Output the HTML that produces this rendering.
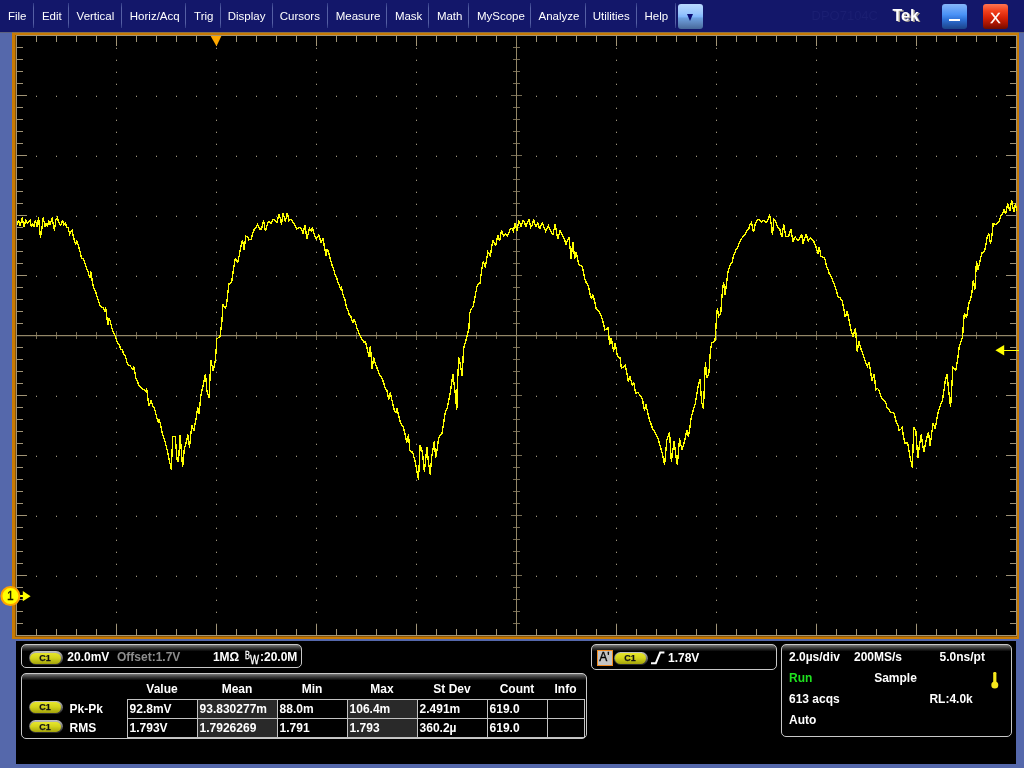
<!DOCTYPE html>
<html><head><meta charset="utf-8"><title>Tek DPO7104C</title>
<style>
html,body{margin:0;padding:0}
body{width:1024px;height:768px;overflow:hidden;background:#5568ab;position:relative;font-family:"Liberation Sans",sans-serif}
#menubar{position:absolute;left:0;top:0;width:1024px;height:32px;background:#13176a}
.mi{position:absolute;top:0;line-height:32px;font-size:11.5px;color:#fff;white-space:nowrap}
.sep{position:absolute;top:3px;width:1px;height:25px;background:linear-gradient(#2f3985,#555fa4 20%,#555fa4 80%,#2f3985)}
#dd{position:absolute;left:678px;top:4px;width:25px;height:25px;border-radius:3px;background:linear-gradient(#b9d9ff 0,#98c5fd 38%,#82b7fb 50%,#6c9fde 57%,#5f88c0 76%,#47689a 100%)}
#dd:after{content:"";position:absolute;left:9.1px;top:10.2px;border-left:3.5px solid transparent;border-right:3.5px solid transparent;border-top:7px solid #0b0c74}
#model{position:absolute;left:811.5px;top:0;line-height:32px;font-size:13px;color:#1b1f72}
#tek{position:absolute;left:892.5px;top:-0.2px;line-height:32px;font-size:16px;font-weight:bold;color:#fff;text-shadow:1.4px 1.3px 0 #a39c90}
.wb{position:absolute;top:4px;width:25px;height:25px;border-radius:3px;color:#fff;text-align:center}
#min{left:942px;background:linear-gradient(#86b6fa,#4a92f6 42%,#2f72d8 62%,#2458ae 82%,#1c4488)}
#min:after{content:"";position:absolute;left:7px;top:14.5px;width:11px;height:2px;background:#fff}
#cls{left:983px;background:linear-gradient(#ff7452,#f2401c 28%,#d62206 55%,#a51402 80%,#6e0c00);font-size:15.5px;line-height:27px;-webkit-text-stroke:0.3px #fff}
#frame{position:absolute;left:12px;top:32px;width:1007px;height:607px;background:#c87a04}
#mrow{position:absolute;left:0;top:32px;width:1024px;height:1px;background:#5d627f}
#ftop{position:absolute;left:12px;top:32px;width:1007px;height:1px;background:#86724e}
#bev{position:absolute;left:15px;top:35px;width:1002px;height:602px;background:#8a5606}
#scr{position:absolute;left:16px;top:35px;width:999px;height:599px;border:1px solid #a29476;background:#000}
#ov{position:absolute;left:0;top:0}
#panel{position:absolute;left:16px;top:641px;width:1000px;height:123px;background:#000}
.box{position:absolute;border:1px solid #c8c8c8;border-radius:5px;background:linear-gradient(#787878 0,#3a3a3a 3px,#000 6.5px);box-sizing:border-box}
.t{position:absolute;font-size:12px;font-weight:bold;color:#fff;white-space:nowrap;line-height:14px}
.pill{position:absolute;width:33.6px;height:13.8px;border-radius:7px;background:linear-gradient(#c4c4c4,#8e8e8e 35%,#3a3a3a 80%,#2a2a2a)}
.pill b{position:absolute;left:1.4px;top:1.9px;right:1.4px;bottom:1.3px;border-radius:6px;background:linear-gradient(#e6e62c,#d4d41c 45%,#a4a40c);font-size:9px;font-weight:bold;line-height:10.2px;color:#111;text-align:center;text-indent:-1.6px;-webkit-text-stroke:0.25px #222}
.ln{position:absolute;background:#c2c2c2}
#root{position:absolute;left:0;top:0;width:1024px;height:768px;will-change:transform}
</style></head><body><div id="root">
<div id="menubar"><span class="mi" style="left:7.9px">File</span><span class="mi" style="left:41.9px">Edit</span><span class="mi" style="left:76.6px">Vertical</span><span class="mi" style="left:129.8px">Horiz/Acq</span><span class="mi" style="left:194.1px">Trig</span><span class="mi" style="left:227.7px">Display</span><span class="mi" style="left:279.7px">Cursors</span><span class="mi" style="left:335.7px">Measure</span><span class="mi" style="left:394.9px">Mask</span><span class="mi" style="left:436.9px">Math</span><span class="mi" style="left:476.9px">MyScope</span><span class="mi" style="left:538.5px">Analyze</span><span class="mi" style="left:592.7px">Utilities</span><span class="mi" style="left:644.5px">Help</span><i class="sep" style="left:33.0px"></i><i class="sep" style="left:68.0px"></i><i class="sep" style="left:121.0px"></i><i class="sep" style="left:185.0px"></i><i class="sep" style="left:220.0px"></i><i class="sep" style="left:272.0px"></i><i class="sep" style="left:327.0px"></i><i class="sep" style="left:386.0px"></i><i class="sep" style="left:428.0px"></i><i class="sep" style="left:468.0px"></i><i class="sep" style="left:530.0px"></i><i class="sep" style="left:585.0px"></i><i class="sep" style="left:636.0px"></i><i class="sep" style="left:675.0px"></i><div id="dd"></div><div id="model">DPO7104C</div><div id="tek">Tek</div><div id="min" class="wb"></div><div id="cls" class="wb">X</div></div>
<div id="mrow"></div><div id="frame"></div><div id="ftop"></div><div id="bev"></div><div id="scr"></div>
<div id="panel"></div>
<div class="box" style="left:21px;top:644px;width:281px;height:24px"></div>
<div class="pill" style="left:29px;top:651.3px"><b>C1</b></div>
<div class="t" style="left:67.3px;top:650.3px;">20.0mV</div>
<div class="t" style="left:117px;top:650.3px;color:#8c8c8c">Offset:1.7V</div>
<div class="t" style="left:212.9px;top:650.3px;">1M&#937;</div>
<div class="t" style="left:245.2px;top:649.0px;font-size:10px;font-weight:normal;-webkit-text-stroke:0.3px #fff;transform:scaleX(0.74);transform-origin:0 0">B</div>
<div class="t" style="left:250.4px;top:652.6px;font-size:12px;font-weight:normal;-webkit-text-stroke:0.3px #fff;transform:scaleX(0.8);transform-origin:0 0">W</div>
<div class="t" style="left:260px;top:650.3px;">:20.0M</div>
<div class="box" style="left:21px;top:673px;width:566px;height:66px"></div>
<div class="t" style="left:127px;width:70px;text-align:center;top:681.8px">Value</div>
<div class="t" style="left:197px;width:80px;text-align:center;top:681.8px">Mean</div>
<div class="t" style="left:277px;width:70px;text-align:center;top:681.8px">Min</div>
<div class="t" style="left:347px;width:70px;text-align:center;top:681.8px">Max</div>
<div class="t" style="left:417px;width:70px;text-align:center;top:681.8px">St Dev</div>
<div class="t" style="left:487px;width:60px;text-align:center;top:681.8px">Count</div>
<div class="t" style="left:547px;width:37px;text-align:center;top:681.8px">Info</div>
<div class="ln" style="left:127px;top:699px;width:458px;height:1px"></div>
<div class="ln" style="left:127px;top:718px;width:458px;height:1px"></div>
<div class="ln" style="left:127px;top:737px;width:458px;height:1px"></div>
<div class="ln" style="left:127px;top:699px;width:1px;height:39px"></div>
<div class="ln" style="left:197px;top:699px;width:1px;height:39px"></div>
<div class="ln" style="left:277px;top:699px;width:1px;height:39px"></div>
<div class="ln" style="left:347px;top:699px;width:1px;height:39px"></div>
<div class="ln" style="left:417px;top:699px;width:1px;height:39px"></div>
<div class="ln" style="left:487px;top:699px;width:1px;height:39px"></div>
<div class="ln" style="left:547px;top:699px;width:1px;height:39px"></div>
<div class="ln" style="left:584px;top:699px;width:1px;height:39px"></div>
<div class="t" style="left:129.6px;top:701.8px;">92.8mV</div>
<div style="position:absolute;left:198px;top:700px;width:79px;height:18px;background:#292929"></div>
<div class="t" style="left:199.6px;top:701.8px;">93.830277m</div>
<div class="t" style="left:279.6px;top:701.8px;">88.0m</div>
<div style="position:absolute;left:348px;top:700px;width:69px;height:18px;background:#292929"></div>
<div class="t" style="left:349.6px;top:701.8px;">106.4m</div>
<div class="t" style="left:419.6px;top:701.8px;">2.491m</div>
<div class="t" style="left:489.6px;top:701.8px;">619.0</div>
<div class="t" style="left:129.6px;top:720.8px;">1.793V</div>
<div style="position:absolute;left:198px;top:719px;width:79px;height:18px;background:#292929"></div>
<div class="t" style="left:199.6px;top:720.8px;">1.7926269</div>
<div class="t" style="left:279.6px;top:720.8px;">1.791</div>
<div style="position:absolute;left:348px;top:719px;width:69px;height:18px;background:#292929"></div>
<div class="t" style="left:349.6px;top:720.8px;">1.793</div>
<div class="t" style="left:419.6px;top:720.8px;">360.2&#181;</div>
<div class="t" style="left:489.6px;top:720.8px;">619.0</div>
<div class="pill" style="left:29px;top:700.5px"><b>C1</b></div>
<div class="pill" style="left:29px;top:719.7px"><b>C1</b></div>
<div class="t" style="left:69.6px;top:701.8px;">Pk-Pk</div>
<div class="t" style="left:69.6px;top:720.8px;">RMS</div>
<div class="box" style="left:591px;top:644px;width:186px;height:26px"></div>
<div style="position:absolute;left:597px;top:650px;width:16px;height:16px;box-sizing:border-box;border:1px solid #f08a20;background:#c4c4c4;font-size:12px;font-weight:normal;-webkit-text-stroke:0.35px #000;line-height:12px;color:#000;text-align:center;text-indent:-1px">A'</div>
<div class="pill" style="left:614px;top:651.5px"><b>C1</b></div>
<svg style="position:absolute;left:649px;top:650px" width="18" height="16" viewBox="649 650 18 16"><path d="M651 663.2 H655.8 L660.2 652.6 H664.4" fill="none" stroke="#fff" stroke-width="2"/></svg>
<div class="t" style="left:668px;top:650.5px;">1.78V</div>
<div class="box" style="left:781px;top:644px;width:231px;height:93px"></div>
<div class="t" style="left:789px;top:649.8px;">2.0&#181;s/div</div>
<div class="t" style="left:854px;top:649.8px;">200MS/s</div>
<div class="t" style="left:939.6px;top:649.8px;">5.0ns/pt</div>
<div class="t" style="left:789px;top:670.8px;color:#1fe31f">Run</div>
<div class="t" style="left:874.2px;top:670.8px;">Sample</div>
<div class="t" style="left:789px;top:691.8px;">613 acqs</div>
<div class="t" style="left:929.4px;top:691.8px;">RL:4.0k</div>
<div class="t" style="left:789px;top:712.8px;">Auto</div>
<svg style="position:absolute;left:989px;top:670px" width="12" height="20" viewBox="989 670 12 20"><rect x="993.2" y="672" width="3.2" height="12" rx="1.2" fill="#f6e81c"/><circle cx="994.8" cy="685.1" r="3.5" fill="#f6e81c"/></svg>
<svg id="ov" width="1024" height="768" viewBox="0 0 1024 768" shape-rendering="crispEdges">
<rect x="36" y="36" width="1" height="6" fill="#a19475"/>
<rect x="36" y="629" width="1" height="6" fill="#a19475"/>
<rect x="56" y="36" width="1" height="6" fill="#a19475"/>
<rect x="56" y="629" width="1" height="6" fill="#a19475"/>
<rect x="76" y="36" width="1" height="6" fill="#a19475"/>
<rect x="76" y="629" width="1" height="6" fill="#a19475"/>
<rect x="96" y="36" width="1" height="6" fill="#a19475"/>
<rect x="96" y="629" width="1" height="6" fill="#a19475"/>
<rect x="116" y="36" width="1" height="10" fill="#a19475"/>
<rect x="116" y="625" width="1" height="10" fill="#a19475"/>
<rect x="136" y="36" width="1" height="6" fill="#a19475"/>
<rect x="136" y="629" width="1" height="6" fill="#a19475"/>
<rect x="156" y="36" width="1" height="6" fill="#a19475"/>
<rect x="156" y="629" width="1" height="6" fill="#a19475"/>
<rect x="176" y="36" width="1" height="6" fill="#a19475"/>
<rect x="176" y="629" width="1" height="6" fill="#a19475"/>
<rect x="196" y="36" width="1" height="6" fill="#a19475"/>
<rect x="196" y="629" width="1" height="6" fill="#a19475"/>
<rect x="216" y="36" width="1" height="10" fill="#a19475"/>
<rect x="216" y="625" width="1" height="10" fill="#a19475"/>
<rect x="236" y="36" width="1" height="6" fill="#a19475"/>
<rect x="236" y="629" width="1" height="6" fill="#a19475"/>
<rect x="256" y="36" width="1" height="6" fill="#a19475"/>
<rect x="256" y="629" width="1" height="6" fill="#a19475"/>
<rect x="276" y="36" width="1" height="6" fill="#a19475"/>
<rect x="276" y="629" width="1" height="6" fill="#a19475"/>
<rect x="296" y="36" width="1" height="6" fill="#a19475"/>
<rect x="296" y="629" width="1" height="6" fill="#a19475"/>
<rect x="316" y="36" width="1" height="10" fill="#a19475"/>
<rect x="316" y="625" width="1" height="10" fill="#a19475"/>
<rect x="336" y="36" width="1" height="6" fill="#a19475"/>
<rect x="336" y="629" width="1" height="6" fill="#a19475"/>
<rect x="356" y="36" width="1" height="6" fill="#a19475"/>
<rect x="356" y="629" width="1" height="6" fill="#a19475"/>
<rect x="376" y="36" width="1" height="6" fill="#a19475"/>
<rect x="376" y="629" width="1" height="6" fill="#a19475"/>
<rect x="396" y="36" width="1" height="6" fill="#a19475"/>
<rect x="396" y="629" width="1" height="6" fill="#a19475"/>
<rect x="416" y="36" width="1" height="10" fill="#a19475"/>
<rect x="416" y="625" width="1" height="10" fill="#a19475"/>
<rect x="436" y="36" width="1" height="6" fill="#a19475"/>
<rect x="436" y="629" width="1" height="6" fill="#a19475"/>
<rect x="456" y="36" width="1" height="6" fill="#a19475"/>
<rect x="456" y="629" width="1" height="6" fill="#a19475"/>
<rect x="476" y="36" width="1" height="6" fill="#a19475"/>
<rect x="476" y="629" width="1" height="6" fill="#a19475"/>
<rect x="496" y="36" width="1" height="6" fill="#a19475"/>
<rect x="496" y="629" width="1" height="6" fill="#a19475"/>
<rect x="516" y="36" width="1" height="10" fill="#a19475"/>
<rect x="516" y="625" width="1" height="10" fill="#a19475"/>
<rect x="536" y="36" width="1" height="6" fill="#a19475"/>
<rect x="536" y="629" width="1" height="6" fill="#a19475"/>
<rect x="556" y="36" width="1" height="6" fill="#a19475"/>
<rect x="556" y="629" width="1" height="6" fill="#a19475"/>
<rect x="576" y="36" width="1" height="6" fill="#a19475"/>
<rect x="576" y="629" width="1" height="6" fill="#a19475"/>
<rect x="596" y="36" width="1" height="6" fill="#a19475"/>
<rect x="596" y="629" width="1" height="6" fill="#a19475"/>
<rect x="616" y="36" width="1" height="10" fill="#a19475"/>
<rect x="616" y="625" width="1" height="10" fill="#a19475"/>
<rect x="636" y="36" width="1" height="6" fill="#a19475"/>
<rect x="636" y="629" width="1" height="6" fill="#a19475"/>
<rect x="656" y="36" width="1" height="6" fill="#a19475"/>
<rect x="656" y="629" width="1" height="6" fill="#a19475"/>
<rect x="676" y="36" width="1" height="6" fill="#a19475"/>
<rect x="676" y="629" width="1" height="6" fill="#a19475"/>
<rect x="696" y="36" width="1" height="6" fill="#a19475"/>
<rect x="696" y="629" width="1" height="6" fill="#a19475"/>
<rect x="716" y="36" width="1" height="10" fill="#a19475"/>
<rect x="716" y="625" width="1" height="10" fill="#a19475"/>
<rect x="736" y="36" width="1" height="6" fill="#a19475"/>
<rect x="736" y="629" width="1" height="6" fill="#a19475"/>
<rect x="756" y="36" width="1" height="6" fill="#a19475"/>
<rect x="756" y="629" width="1" height="6" fill="#a19475"/>
<rect x="776" y="36" width="1" height="6" fill="#a19475"/>
<rect x="776" y="629" width="1" height="6" fill="#a19475"/>
<rect x="796" y="36" width="1" height="6" fill="#a19475"/>
<rect x="796" y="629" width="1" height="6" fill="#a19475"/>
<rect x="816" y="36" width="1" height="10" fill="#a19475"/>
<rect x="816" y="625" width="1" height="10" fill="#a19475"/>
<rect x="836" y="36" width="1" height="6" fill="#a19475"/>
<rect x="836" y="629" width="1" height="6" fill="#a19475"/>
<rect x="856" y="36" width="1" height="6" fill="#a19475"/>
<rect x="856" y="629" width="1" height="6" fill="#a19475"/>
<rect x="876" y="36" width="1" height="6" fill="#a19475"/>
<rect x="876" y="629" width="1" height="6" fill="#a19475"/>
<rect x="896" y="36" width="1" height="6" fill="#a19475"/>
<rect x="896" y="629" width="1" height="6" fill="#a19475"/>
<rect x="916" y="36" width="1" height="10" fill="#a19475"/>
<rect x="916" y="625" width="1" height="10" fill="#a19475"/>
<rect x="936" y="36" width="1" height="6" fill="#a19475"/>
<rect x="936" y="629" width="1" height="6" fill="#a19475"/>
<rect x="956" y="36" width="1" height="6" fill="#a19475"/>
<rect x="956" y="629" width="1" height="6" fill="#a19475"/>
<rect x="976" y="36" width="1" height="6" fill="#a19475"/>
<rect x="976" y="629" width="1" height="6" fill="#a19475"/>
<rect x="996" y="36" width="1" height="6" fill="#a19475"/>
<rect x="996" y="629" width="1" height="6" fill="#a19475"/>
<rect x="17" y="47" width="6" height="1" fill="#a19475"/>
<rect x="1010" y="47" width="6" height="1" fill="#a19475"/>
<rect x="17" y="59" width="6" height="1" fill="#a19475"/>
<rect x="1010" y="59" width="6" height="1" fill="#a19475"/>
<rect x="17" y="71" width="6" height="1" fill="#a19475"/>
<rect x="1010" y="71" width="6" height="1" fill="#a19475"/>
<rect x="17" y="83" width="6" height="1" fill="#a19475"/>
<rect x="1010" y="83" width="6" height="1" fill="#a19475"/>
<rect x="17" y="95" width="10" height="1" fill="#a19475"/>
<rect x="1006" y="95" width="10" height="1" fill="#a19475"/>
<rect x="17" y="107" width="6" height="1" fill="#a19475"/>
<rect x="1010" y="107" width="6" height="1" fill="#a19475"/>
<rect x="17" y="119" width="6" height="1" fill="#a19475"/>
<rect x="1010" y="119" width="6" height="1" fill="#a19475"/>
<rect x="17" y="131" width="6" height="1" fill="#a19475"/>
<rect x="1010" y="131" width="6" height="1" fill="#a19475"/>
<rect x="17" y="143" width="6" height="1" fill="#a19475"/>
<rect x="1010" y="143" width="6" height="1" fill="#a19475"/>
<rect x="17" y="155" width="10" height="1" fill="#a19475"/>
<rect x="1006" y="155" width="10" height="1" fill="#a19475"/>
<rect x="17" y="167" width="6" height="1" fill="#a19475"/>
<rect x="1010" y="167" width="6" height="1" fill="#a19475"/>
<rect x="17" y="179" width="6" height="1" fill="#a19475"/>
<rect x="1010" y="179" width="6" height="1" fill="#a19475"/>
<rect x="17" y="191" width="6" height="1" fill="#a19475"/>
<rect x="1010" y="191" width="6" height="1" fill="#a19475"/>
<rect x="17" y="203" width="6" height="1" fill="#a19475"/>
<rect x="1010" y="203" width="6" height="1" fill="#a19475"/>
<rect x="17" y="215" width="10" height="1" fill="#a19475"/>
<rect x="1006" y="215" width="10" height="1" fill="#a19475"/>
<rect x="17" y="227" width="6" height="1" fill="#a19475"/>
<rect x="1010" y="227" width="6" height="1" fill="#a19475"/>
<rect x="17" y="239" width="6" height="1" fill="#a19475"/>
<rect x="1010" y="239" width="6" height="1" fill="#a19475"/>
<rect x="17" y="251" width="6" height="1" fill="#a19475"/>
<rect x="1010" y="251" width="6" height="1" fill="#a19475"/>
<rect x="17" y="263" width="6" height="1" fill="#a19475"/>
<rect x="1010" y="263" width="6" height="1" fill="#a19475"/>
<rect x="17" y="275" width="10" height="1" fill="#a19475"/>
<rect x="1006" y="275" width="10" height="1" fill="#a19475"/>
<rect x="17" y="287" width="6" height="1" fill="#a19475"/>
<rect x="1010" y="287" width="6" height="1" fill="#a19475"/>
<rect x="17" y="299" width="6" height="1" fill="#a19475"/>
<rect x="1010" y="299" width="6" height="1" fill="#a19475"/>
<rect x="17" y="311" width="6" height="1" fill="#a19475"/>
<rect x="1010" y="311" width="6" height="1" fill="#a19475"/>
<rect x="17" y="323" width="6" height="1" fill="#a19475"/>
<rect x="1010" y="323" width="6" height="1" fill="#a19475"/>
<rect x="17" y="335" width="10" height="1" fill="#a19475"/>
<rect x="1006" y="335" width="10" height="1" fill="#a19475"/>
<rect x="17" y="347" width="6" height="1" fill="#a19475"/>
<rect x="1010" y="347" width="6" height="1" fill="#a19475"/>
<rect x="17" y="359" width="6" height="1" fill="#a19475"/>
<rect x="1010" y="359" width="6" height="1" fill="#a19475"/>
<rect x="17" y="371" width="6" height="1" fill="#a19475"/>
<rect x="1010" y="371" width="6" height="1" fill="#a19475"/>
<rect x="17" y="383" width="6" height="1" fill="#a19475"/>
<rect x="1010" y="383" width="6" height="1" fill="#a19475"/>
<rect x="17" y="395" width="10" height="1" fill="#a19475"/>
<rect x="1006" y="395" width="10" height="1" fill="#a19475"/>
<rect x="17" y="407" width="6" height="1" fill="#a19475"/>
<rect x="1010" y="407" width="6" height="1" fill="#a19475"/>
<rect x="17" y="419" width="6" height="1" fill="#a19475"/>
<rect x="1010" y="419" width="6" height="1" fill="#a19475"/>
<rect x="17" y="431" width="6" height="1" fill="#a19475"/>
<rect x="1010" y="431" width="6" height="1" fill="#a19475"/>
<rect x="17" y="443" width="6" height="1" fill="#a19475"/>
<rect x="1010" y="443" width="6" height="1" fill="#a19475"/>
<rect x="17" y="455" width="10" height="1" fill="#a19475"/>
<rect x="1006" y="455" width="10" height="1" fill="#a19475"/>
<rect x="17" y="467" width="6" height="1" fill="#a19475"/>
<rect x="1010" y="467" width="6" height="1" fill="#a19475"/>
<rect x="17" y="479" width="6" height="1" fill="#a19475"/>
<rect x="1010" y="479" width="6" height="1" fill="#a19475"/>
<rect x="17" y="491" width="6" height="1" fill="#a19475"/>
<rect x="1010" y="491" width="6" height="1" fill="#a19475"/>
<rect x="17" y="503" width="6" height="1" fill="#a19475"/>
<rect x="1010" y="503" width="6" height="1" fill="#a19475"/>
<rect x="17" y="515" width="10" height="1" fill="#a19475"/>
<rect x="1006" y="515" width="10" height="1" fill="#a19475"/>
<rect x="17" y="527" width="6" height="1" fill="#a19475"/>
<rect x="1010" y="527" width="6" height="1" fill="#a19475"/>
<rect x="17" y="539" width="6" height="1" fill="#a19475"/>
<rect x="1010" y="539" width="6" height="1" fill="#a19475"/>
<rect x="17" y="551" width="6" height="1" fill="#a19475"/>
<rect x="1010" y="551" width="6" height="1" fill="#a19475"/>
<rect x="17" y="563" width="6" height="1" fill="#a19475"/>
<rect x="1010" y="563" width="6" height="1" fill="#a19475"/>
<rect x="17" y="575" width="10" height="1" fill="#a19475"/>
<rect x="1006" y="575" width="10" height="1" fill="#a19475"/>
<rect x="17" y="587" width="6" height="1" fill="#a19475"/>
<rect x="1010" y="587" width="6" height="1" fill="#a19475"/>
<rect x="17" y="599" width="6" height="1" fill="#a19475"/>
<rect x="1010" y="599" width="6" height="1" fill="#a19475"/>
<rect x="17" y="611" width="6" height="1" fill="#a19475"/>
<rect x="1010" y="611" width="6" height="1" fill="#a19475"/>
<rect x="17" y="623" width="6" height="1" fill="#a19475"/>
<rect x="1010" y="623" width="6" height="1" fill="#a19475"/>
<rect x="17" y="335" width="999" height="1" fill="#938768"/>
<rect x="17" y="336" width="999" height="1" fill="#938768" opacity="0.22"/>
<rect x="516" y="36" width="1" height="599" fill="#938768"/>
<rect x="36" y="332" width="1" height="7" fill="#938768" opacity="0.8"/>
<rect x="56" y="332" width="1" height="7" fill="#938768" opacity="0.8"/>
<rect x="76" y="332" width="1" height="7" fill="#938768" opacity="0.8"/>
<rect x="96" y="332" width="1" height="7" fill="#938768" opacity="0.8"/>
<rect x="116" y="331" width="1" height="9" fill="#938768" opacity="0.8"/>
<rect x="136" y="332" width="1" height="7" fill="#938768" opacity="0.8"/>
<rect x="156" y="332" width="1" height="7" fill="#938768" opacity="0.8"/>
<rect x="176" y="332" width="1" height="7" fill="#938768" opacity="0.8"/>
<rect x="196" y="332" width="1" height="7" fill="#938768" opacity="0.8"/>
<rect x="216" y="331" width="1" height="9" fill="#938768" opacity="0.8"/>
<rect x="236" y="332" width="1" height="7" fill="#938768" opacity="0.8"/>
<rect x="256" y="332" width="1" height="7" fill="#938768" opacity="0.8"/>
<rect x="276" y="332" width="1" height="7" fill="#938768" opacity="0.8"/>
<rect x="296" y="332" width="1" height="7" fill="#938768" opacity="0.8"/>
<rect x="316" y="331" width="1" height="9" fill="#938768" opacity="0.8"/>
<rect x="336" y="332" width="1" height="7" fill="#938768" opacity="0.8"/>
<rect x="356" y="332" width="1" height="7" fill="#938768" opacity="0.8"/>
<rect x="376" y="332" width="1" height="7" fill="#938768" opacity="0.8"/>
<rect x="396" y="332" width="1" height="7" fill="#938768" opacity="0.8"/>
<rect x="416" y="331" width="1" height="9" fill="#938768" opacity="0.8"/>
<rect x="436" y="332" width="1" height="7" fill="#938768" opacity="0.8"/>
<rect x="456" y="332" width="1" height="7" fill="#938768" opacity="0.8"/>
<rect x="476" y="332" width="1" height="7" fill="#938768" opacity="0.8"/>
<rect x="496" y="332" width="1" height="7" fill="#938768" opacity="0.8"/>
<rect x="536" y="332" width="1" height="7" fill="#938768" opacity="0.8"/>
<rect x="556" y="332" width="1" height="7" fill="#938768" opacity="0.8"/>
<rect x="576" y="332" width="1" height="7" fill="#938768" opacity="0.8"/>
<rect x="596" y="332" width="1" height="7" fill="#938768" opacity="0.8"/>
<rect x="616" y="331" width="1" height="9" fill="#938768" opacity="0.8"/>
<rect x="636" y="332" width="1" height="7" fill="#938768" opacity="0.8"/>
<rect x="656" y="332" width="1" height="7" fill="#938768" opacity="0.8"/>
<rect x="676" y="332" width="1" height="7" fill="#938768" opacity="0.8"/>
<rect x="696" y="332" width="1" height="7" fill="#938768" opacity="0.8"/>
<rect x="716" y="331" width="1" height="9" fill="#938768" opacity="0.8"/>
<rect x="736" y="332" width="1" height="7" fill="#938768" opacity="0.8"/>
<rect x="756" y="332" width="1" height="7" fill="#938768" opacity="0.8"/>
<rect x="776" y="332" width="1" height="7" fill="#938768" opacity="0.8"/>
<rect x="796" y="332" width="1" height="7" fill="#938768" opacity="0.8"/>
<rect x="816" y="331" width="1" height="9" fill="#938768" opacity="0.8"/>
<rect x="836" y="332" width="1" height="7" fill="#938768" opacity="0.8"/>
<rect x="856" y="332" width="1" height="7" fill="#938768" opacity="0.8"/>
<rect x="876" y="332" width="1" height="7" fill="#938768" opacity="0.8"/>
<rect x="896" y="332" width="1" height="7" fill="#938768" opacity="0.8"/>
<rect x="916" y="331" width="1" height="9" fill="#938768" opacity="0.8"/>
<rect x="936" y="332" width="1" height="7" fill="#938768" opacity="0.8"/>
<rect x="956" y="332" width="1" height="7" fill="#938768" opacity="0.8"/>
<rect x="976" y="332" width="1" height="7" fill="#938768" opacity="0.8"/>
<rect x="996" y="332" width="1" height="7" fill="#938768" opacity="0.8"/>
<rect x="513" y="47" width="7" height="1" fill="#938768" opacity="0.8"/>
<rect x="513" y="59" width="7" height="1" fill="#938768" opacity="0.8"/>
<rect x="513" y="71" width="7" height="1" fill="#938768" opacity="0.8"/>
<rect x="513" y="83" width="7" height="1" fill="#938768" opacity="0.8"/>
<rect x="511" y="95" width="11" height="1" fill="#938768" opacity="0.8"/>
<rect x="513" y="107" width="7" height="1" fill="#938768" opacity="0.8"/>
<rect x="513" y="119" width="7" height="1" fill="#938768" opacity="0.8"/>
<rect x="513" y="131" width="7" height="1" fill="#938768" opacity="0.8"/>
<rect x="513" y="143" width="7" height="1" fill="#938768" opacity="0.8"/>
<rect x="511" y="155" width="11" height="1" fill="#938768" opacity="0.8"/>
<rect x="513" y="167" width="7" height="1" fill="#938768" opacity="0.8"/>
<rect x="513" y="179" width="7" height="1" fill="#938768" opacity="0.8"/>
<rect x="513" y="191" width="7" height="1" fill="#938768" opacity="0.8"/>
<rect x="513" y="203" width="7" height="1" fill="#938768" opacity="0.8"/>
<rect x="511" y="215" width="11" height="1" fill="#938768" opacity="0.8"/>
<rect x="513" y="227" width="7" height="1" fill="#938768" opacity="0.8"/>
<rect x="513" y="239" width="7" height="1" fill="#938768" opacity="0.8"/>
<rect x="513" y="251" width="7" height="1" fill="#938768" opacity="0.8"/>
<rect x="513" y="263" width="7" height="1" fill="#938768" opacity="0.8"/>
<rect x="511" y="275" width="11" height="1" fill="#938768" opacity="0.8"/>
<rect x="513" y="287" width="7" height="1" fill="#938768" opacity="0.8"/>
<rect x="513" y="299" width="7" height="1" fill="#938768" opacity="0.8"/>
<rect x="513" y="311" width="7" height="1" fill="#938768" opacity="0.8"/>
<rect x="513" y="323" width="7" height="1" fill="#938768" opacity="0.8"/>
<rect x="513" y="347" width="7" height="1" fill="#938768" opacity="0.8"/>
<rect x="513" y="359" width="7" height="1" fill="#938768" opacity="0.8"/>
<rect x="513" y="371" width="7" height="1" fill="#938768" opacity="0.8"/>
<rect x="513" y="383" width="7" height="1" fill="#938768" opacity="0.8"/>
<rect x="511" y="395" width="11" height="1" fill="#938768" opacity="0.8"/>
<rect x="513" y="407" width="7" height="1" fill="#938768" opacity="0.8"/>
<rect x="513" y="419" width="7" height="1" fill="#938768" opacity="0.8"/>
<rect x="513" y="431" width="7" height="1" fill="#938768" opacity="0.8"/>
<rect x="513" y="443" width="7" height="1" fill="#938768" opacity="0.8"/>
<rect x="511" y="455" width="11" height="1" fill="#938768" opacity="0.8"/>
<rect x="513" y="467" width="7" height="1" fill="#938768" opacity="0.8"/>
<rect x="513" y="479" width="7" height="1" fill="#938768" opacity="0.8"/>
<rect x="513" y="491" width="7" height="1" fill="#938768" opacity="0.8"/>
<rect x="513" y="503" width="7" height="1" fill="#938768" opacity="0.8"/>
<rect x="511" y="515" width="11" height="1" fill="#938768" opacity="0.8"/>
<rect x="513" y="527" width="7" height="1" fill="#938768" opacity="0.8"/>
<rect x="513" y="539" width="7" height="1" fill="#938768" opacity="0.8"/>
<rect x="513" y="551" width="7" height="1" fill="#938768" opacity="0.8"/>
<rect x="513" y="563" width="7" height="1" fill="#938768" opacity="0.8"/>
<rect x="511" y="575" width="11" height="1" fill="#938768" opacity="0.8"/>
<rect x="513" y="587" width="7" height="1" fill="#938768" opacity="0.8"/>
<rect x="513" y="599" width="7" height="1" fill="#938768" opacity="0.8"/>
<rect x="513" y="611" width="7" height="1" fill="#938768" opacity="0.8"/>
<rect x="513" y="623" width="7" height="1" fill="#938768" opacity="0.8"/>
<path d="M116 48h1v1h-1zM116 60h1v1h-1zM116 72h1v1h-1zM116 84h1v1h-1zM116 96h1v1h-1zM116 108h1v1h-1zM116 120h1v1h-1zM116 132h1v1h-1zM116 144h1v1h-1zM116 156h1v1h-1zM116 168h1v1h-1zM116 180h1v1h-1zM116 192h1v1h-1zM116 204h1v1h-1zM116 216h1v1h-1zM116 228h1v1h-1zM116 240h1v1h-1zM116 252h1v1h-1zM116 264h1v1h-1zM116 276h1v1h-1zM116 288h1v1h-1zM116 300h1v1h-1zM116 312h1v1h-1zM116 324h1v1h-1zM116 348h1v1h-1zM116 360h1v1h-1zM116 372h1v1h-1zM116 384h1v1h-1zM116 396h1v1h-1zM116 408h1v1h-1zM116 420h1v1h-1zM116 432h1v1h-1zM116 444h1v1h-1zM116 456h1v1h-1zM116 468h1v1h-1zM116 480h1v1h-1zM116 492h1v1h-1zM116 504h1v1h-1zM116 516h1v1h-1zM116 528h1v1h-1zM116 540h1v1h-1zM116 552h1v1h-1zM116 564h1v1h-1zM116 576h1v1h-1zM116 588h1v1h-1zM116 600h1v1h-1zM116 612h1v1h-1zM116 624h1v1h-1zM216 48h1v1h-1zM216 60h1v1h-1zM216 72h1v1h-1zM216 84h1v1h-1zM216 96h1v1h-1zM216 108h1v1h-1zM216 120h1v1h-1zM216 132h1v1h-1zM216 144h1v1h-1zM216 156h1v1h-1zM216 168h1v1h-1zM216 180h1v1h-1zM216 192h1v1h-1zM216 204h1v1h-1zM216 216h1v1h-1zM216 228h1v1h-1zM216 240h1v1h-1zM216 252h1v1h-1zM216 264h1v1h-1zM216 276h1v1h-1zM216 288h1v1h-1zM216 300h1v1h-1zM216 312h1v1h-1zM216 324h1v1h-1zM216 348h1v1h-1zM216 360h1v1h-1zM216 372h1v1h-1zM216 384h1v1h-1zM216 396h1v1h-1zM216 408h1v1h-1zM216 420h1v1h-1zM216 432h1v1h-1zM216 444h1v1h-1zM216 456h1v1h-1zM216 468h1v1h-1zM216 480h1v1h-1zM216 492h1v1h-1zM216 504h1v1h-1zM216 516h1v1h-1zM216 528h1v1h-1zM216 540h1v1h-1zM216 552h1v1h-1zM216 564h1v1h-1zM216 576h1v1h-1zM216 588h1v1h-1zM216 600h1v1h-1zM216 612h1v1h-1zM216 624h1v1h-1zM316 48h1v1h-1zM316 60h1v1h-1zM316 72h1v1h-1zM316 84h1v1h-1zM316 96h1v1h-1zM316 108h1v1h-1zM316 120h1v1h-1zM316 132h1v1h-1zM316 144h1v1h-1zM316 156h1v1h-1zM316 168h1v1h-1zM316 180h1v1h-1zM316 192h1v1h-1zM316 204h1v1h-1zM316 216h1v1h-1zM316 228h1v1h-1zM316 240h1v1h-1zM316 252h1v1h-1zM316 264h1v1h-1zM316 276h1v1h-1zM316 288h1v1h-1zM316 300h1v1h-1zM316 312h1v1h-1zM316 324h1v1h-1zM316 348h1v1h-1zM316 360h1v1h-1zM316 372h1v1h-1zM316 384h1v1h-1zM316 396h1v1h-1zM316 408h1v1h-1zM316 420h1v1h-1zM316 432h1v1h-1zM316 444h1v1h-1zM316 456h1v1h-1zM316 468h1v1h-1zM316 480h1v1h-1zM316 492h1v1h-1zM316 504h1v1h-1zM316 516h1v1h-1zM316 528h1v1h-1zM316 540h1v1h-1zM316 552h1v1h-1zM316 564h1v1h-1zM316 576h1v1h-1zM316 588h1v1h-1zM316 600h1v1h-1zM316 612h1v1h-1zM316 624h1v1h-1zM416 48h1v1h-1zM416 60h1v1h-1zM416 72h1v1h-1zM416 84h1v1h-1zM416 96h1v1h-1zM416 108h1v1h-1zM416 120h1v1h-1zM416 132h1v1h-1zM416 144h1v1h-1zM416 156h1v1h-1zM416 168h1v1h-1zM416 180h1v1h-1zM416 192h1v1h-1zM416 204h1v1h-1zM416 216h1v1h-1zM416 228h1v1h-1zM416 240h1v1h-1zM416 252h1v1h-1zM416 264h1v1h-1zM416 276h1v1h-1zM416 288h1v1h-1zM416 300h1v1h-1zM416 312h1v1h-1zM416 324h1v1h-1zM416 348h1v1h-1zM416 360h1v1h-1zM416 372h1v1h-1zM416 384h1v1h-1zM416 396h1v1h-1zM416 408h1v1h-1zM416 420h1v1h-1zM416 432h1v1h-1zM416 444h1v1h-1zM416 456h1v1h-1zM416 468h1v1h-1zM416 480h1v1h-1zM416 492h1v1h-1zM416 504h1v1h-1zM416 516h1v1h-1zM416 528h1v1h-1zM416 540h1v1h-1zM416 552h1v1h-1zM416 564h1v1h-1zM416 576h1v1h-1zM416 588h1v1h-1zM416 600h1v1h-1zM416 612h1v1h-1zM416 624h1v1h-1zM616 48h1v1h-1zM616 60h1v1h-1zM616 72h1v1h-1zM616 84h1v1h-1zM616 96h1v1h-1zM616 108h1v1h-1zM616 120h1v1h-1zM616 132h1v1h-1zM616 144h1v1h-1zM616 156h1v1h-1zM616 168h1v1h-1zM616 180h1v1h-1zM616 192h1v1h-1zM616 204h1v1h-1zM616 216h1v1h-1zM616 228h1v1h-1zM616 240h1v1h-1zM616 252h1v1h-1zM616 264h1v1h-1zM616 276h1v1h-1zM616 288h1v1h-1zM616 300h1v1h-1zM616 312h1v1h-1zM616 324h1v1h-1zM616 348h1v1h-1zM616 360h1v1h-1zM616 372h1v1h-1zM616 384h1v1h-1zM616 396h1v1h-1zM616 408h1v1h-1zM616 420h1v1h-1zM616 432h1v1h-1zM616 444h1v1h-1zM616 456h1v1h-1zM616 468h1v1h-1zM616 480h1v1h-1zM616 492h1v1h-1zM616 504h1v1h-1zM616 516h1v1h-1zM616 528h1v1h-1zM616 540h1v1h-1zM616 552h1v1h-1zM616 564h1v1h-1zM616 576h1v1h-1zM616 588h1v1h-1zM616 600h1v1h-1zM616 612h1v1h-1zM616 624h1v1h-1zM716 48h1v1h-1zM716 60h1v1h-1zM716 72h1v1h-1zM716 84h1v1h-1zM716 96h1v1h-1zM716 108h1v1h-1zM716 120h1v1h-1zM716 132h1v1h-1zM716 144h1v1h-1zM716 156h1v1h-1zM716 168h1v1h-1zM716 180h1v1h-1zM716 192h1v1h-1zM716 204h1v1h-1zM716 216h1v1h-1zM716 228h1v1h-1zM716 240h1v1h-1zM716 252h1v1h-1zM716 264h1v1h-1zM716 276h1v1h-1zM716 288h1v1h-1zM716 300h1v1h-1zM716 312h1v1h-1zM716 324h1v1h-1zM716 348h1v1h-1zM716 360h1v1h-1zM716 372h1v1h-1zM716 384h1v1h-1zM716 396h1v1h-1zM716 408h1v1h-1zM716 420h1v1h-1zM716 432h1v1h-1zM716 444h1v1h-1zM716 456h1v1h-1zM716 468h1v1h-1zM716 480h1v1h-1zM716 492h1v1h-1zM716 504h1v1h-1zM716 516h1v1h-1zM716 528h1v1h-1zM716 540h1v1h-1zM716 552h1v1h-1zM716 564h1v1h-1zM716 576h1v1h-1zM716 588h1v1h-1zM716 600h1v1h-1zM716 612h1v1h-1zM716 624h1v1h-1zM816 48h1v1h-1zM816 60h1v1h-1zM816 72h1v1h-1zM816 84h1v1h-1zM816 96h1v1h-1zM816 108h1v1h-1zM816 120h1v1h-1zM816 132h1v1h-1zM816 144h1v1h-1zM816 156h1v1h-1zM816 168h1v1h-1zM816 180h1v1h-1zM816 192h1v1h-1zM816 204h1v1h-1zM816 216h1v1h-1zM816 228h1v1h-1zM816 240h1v1h-1zM816 252h1v1h-1zM816 264h1v1h-1zM816 276h1v1h-1zM816 288h1v1h-1zM816 300h1v1h-1zM816 312h1v1h-1zM816 324h1v1h-1zM816 348h1v1h-1zM816 360h1v1h-1zM816 372h1v1h-1zM816 384h1v1h-1zM816 396h1v1h-1zM816 408h1v1h-1zM816 420h1v1h-1zM816 432h1v1h-1zM816 444h1v1h-1zM816 456h1v1h-1zM816 468h1v1h-1zM816 480h1v1h-1zM816 492h1v1h-1zM816 504h1v1h-1zM816 516h1v1h-1zM816 528h1v1h-1zM816 540h1v1h-1zM816 552h1v1h-1zM816 564h1v1h-1zM816 576h1v1h-1zM816 588h1v1h-1zM816 600h1v1h-1zM816 612h1v1h-1zM816 624h1v1h-1zM916 48h1v1h-1zM916 60h1v1h-1zM916 72h1v1h-1zM916 84h1v1h-1zM916 96h1v1h-1zM916 108h1v1h-1zM916 120h1v1h-1zM916 132h1v1h-1zM916 144h1v1h-1zM916 156h1v1h-1zM916 168h1v1h-1zM916 180h1v1h-1zM916 192h1v1h-1zM916 204h1v1h-1zM916 216h1v1h-1zM916 228h1v1h-1zM916 240h1v1h-1zM916 252h1v1h-1zM916 264h1v1h-1zM916 276h1v1h-1zM916 288h1v1h-1zM916 300h1v1h-1zM916 312h1v1h-1zM916 324h1v1h-1zM916 348h1v1h-1zM916 360h1v1h-1zM916 372h1v1h-1zM916 384h1v1h-1zM916 396h1v1h-1zM916 408h1v1h-1zM916 420h1v1h-1zM916 432h1v1h-1zM916 444h1v1h-1zM916 456h1v1h-1zM916 468h1v1h-1zM916 480h1v1h-1zM916 492h1v1h-1zM916 504h1v1h-1zM916 516h1v1h-1zM916 528h1v1h-1zM916 540h1v1h-1zM916 552h1v1h-1zM916 564h1v1h-1zM916 576h1v1h-1zM916 588h1v1h-1zM916 600h1v1h-1zM916 612h1v1h-1zM916 624h1v1h-1zM36 96h1v1h-1zM56 96h1v1h-1zM76 96h1v1h-1zM96 96h1v1h-1zM136 96h1v1h-1zM156 96h1v1h-1zM176 96h1v1h-1zM196 96h1v1h-1zM236 96h1v1h-1zM256 96h1v1h-1zM276 96h1v1h-1zM296 96h1v1h-1zM336 96h1v1h-1zM356 96h1v1h-1zM376 96h1v1h-1zM396 96h1v1h-1zM436 96h1v1h-1zM456 96h1v1h-1zM476 96h1v1h-1zM496 96h1v1h-1zM536 96h1v1h-1zM556 96h1v1h-1zM576 96h1v1h-1zM596 96h1v1h-1zM636 96h1v1h-1zM656 96h1v1h-1zM676 96h1v1h-1zM696 96h1v1h-1zM736 96h1v1h-1zM756 96h1v1h-1zM776 96h1v1h-1zM796 96h1v1h-1zM836 96h1v1h-1zM856 96h1v1h-1zM876 96h1v1h-1zM896 96h1v1h-1zM936 96h1v1h-1zM956 96h1v1h-1zM976 96h1v1h-1zM996 96h1v1h-1zM36 156h1v1h-1zM56 156h1v1h-1zM76 156h1v1h-1zM96 156h1v1h-1zM136 156h1v1h-1zM156 156h1v1h-1zM176 156h1v1h-1zM196 156h1v1h-1zM236 156h1v1h-1zM256 156h1v1h-1zM276 156h1v1h-1zM296 156h1v1h-1zM336 156h1v1h-1zM356 156h1v1h-1zM376 156h1v1h-1zM396 156h1v1h-1zM436 156h1v1h-1zM456 156h1v1h-1zM476 156h1v1h-1zM496 156h1v1h-1zM536 156h1v1h-1zM556 156h1v1h-1zM576 156h1v1h-1zM596 156h1v1h-1zM636 156h1v1h-1zM656 156h1v1h-1zM676 156h1v1h-1zM696 156h1v1h-1zM736 156h1v1h-1zM756 156h1v1h-1zM776 156h1v1h-1zM796 156h1v1h-1zM836 156h1v1h-1zM856 156h1v1h-1zM876 156h1v1h-1zM896 156h1v1h-1zM936 156h1v1h-1zM956 156h1v1h-1zM976 156h1v1h-1zM996 156h1v1h-1zM36 216h1v1h-1zM56 216h1v1h-1zM76 216h1v1h-1zM96 216h1v1h-1zM136 216h1v1h-1zM156 216h1v1h-1zM176 216h1v1h-1zM196 216h1v1h-1zM236 216h1v1h-1zM256 216h1v1h-1zM276 216h1v1h-1zM296 216h1v1h-1zM336 216h1v1h-1zM356 216h1v1h-1zM376 216h1v1h-1zM396 216h1v1h-1zM436 216h1v1h-1zM456 216h1v1h-1zM476 216h1v1h-1zM496 216h1v1h-1zM536 216h1v1h-1zM556 216h1v1h-1zM576 216h1v1h-1zM596 216h1v1h-1zM636 216h1v1h-1zM656 216h1v1h-1zM676 216h1v1h-1zM696 216h1v1h-1zM736 216h1v1h-1zM756 216h1v1h-1zM776 216h1v1h-1zM796 216h1v1h-1zM836 216h1v1h-1zM856 216h1v1h-1zM876 216h1v1h-1zM896 216h1v1h-1zM936 216h1v1h-1zM956 216h1v1h-1zM976 216h1v1h-1zM996 216h1v1h-1zM36 276h1v1h-1zM56 276h1v1h-1zM76 276h1v1h-1zM96 276h1v1h-1zM136 276h1v1h-1zM156 276h1v1h-1zM176 276h1v1h-1zM196 276h1v1h-1zM236 276h1v1h-1zM256 276h1v1h-1zM276 276h1v1h-1zM296 276h1v1h-1zM336 276h1v1h-1zM356 276h1v1h-1zM376 276h1v1h-1zM396 276h1v1h-1zM436 276h1v1h-1zM456 276h1v1h-1zM476 276h1v1h-1zM496 276h1v1h-1zM536 276h1v1h-1zM556 276h1v1h-1zM576 276h1v1h-1zM596 276h1v1h-1zM636 276h1v1h-1zM656 276h1v1h-1zM676 276h1v1h-1zM696 276h1v1h-1zM736 276h1v1h-1zM756 276h1v1h-1zM776 276h1v1h-1zM796 276h1v1h-1zM836 276h1v1h-1zM856 276h1v1h-1zM876 276h1v1h-1zM896 276h1v1h-1zM936 276h1v1h-1zM956 276h1v1h-1zM976 276h1v1h-1zM996 276h1v1h-1zM36 396h1v1h-1zM56 396h1v1h-1zM76 396h1v1h-1zM96 396h1v1h-1zM136 396h1v1h-1zM156 396h1v1h-1zM176 396h1v1h-1zM196 396h1v1h-1zM236 396h1v1h-1zM256 396h1v1h-1zM276 396h1v1h-1zM296 396h1v1h-1zM336 396h1v1h-1zM356 396h1v1h-1zM376 396h1v1h-1zM396 396h1v1h-1zM436 396h1v1h-1zM456 396h1v1h-1zM476 396h1v1h-1zM496 396h1v1h-1zM536 396h1v1h-1zM556 396h1v1h-1zM576 396h1v1h-1zM596 396h1v1h-1zM636 396h1v1h-1zM656 396h1v1h-1zM676 396h1v1h-1zM696 396h1v1h-1zM736 396h1v1h-1zM756 396h1v1h-1zM776 396h1v1h-1zM796 396h1v1h-1zM836 396h1v1h-1zM856 396h1v1h-1zM876 396h1v1h-1zM896 396h1v1h-1zM936 396h1v1h-1zM956 396h1v1h-1zM976 396h1v1h-1zM996 396h1v1h-1zM36 456h1v1h-1zM56 456h1v1h-1zM76 456h1v1h-1zM96 456h1v1h-1zM136 456h1v1h-1zM156 456h1v1h-1zM176 456h1v1h-1zM196 456h1v1h-1zM236 456h1v1h-1zM256 456h1v1h-1zM276 456h1v1h-1zM296 456h1v1h-1zM336 456h1v1h-1zM356 456h1v1h-1zM376 456h1v1h-1zM396 456h1v1h-1zM436 456h1v1h-1zM456 456h1v1h-1zM476 456h1v1h-1zM496 456h1v1h-1zM536 456h1v1h-1zM556 456h1v1h-1zM576 456h1v1h-1zM596 456h1v1h-1zM636 456h1v1h-1zM656 456h1v1h-1zM676 456h1v1h-1zM696 456h1v1h-1zM736 456h1v1h-1zM756 456h1v1h-1zM776 456h1v1h-1zM796 456h1v1h-1zM836 456h1v1h-1zM856 456h1v1h-1zM876 456h1v1h-1zM896 456h1v1h-1zM936 456h1v1h-1zM956 456h1v1h-1zM976 456h1v1h-1zM996 456h1v1h-1zM36 516h1v1h-1zM56 516h1v1h-1zM76 516h1v1h-1zM96 516h1v1h-1zM136 516h1v1h-1zM156 516h1v1h-1zM176 516h1v1h-1zM196 516h1v1h-1zM236 516h1v1h-1zM256 516h1v1h-1zM276 516h1v1h-1zM296 516h1v1h-1zM336 516h1v1h-1zM356 516h1v1h-1zM376 516h1v1h-1zM396 516h1v1h-1zM436 516h1v1h-1zM456 516h1v1h-1zM476 516h1v1h-1zM496 516h1v1h-1zM536 516h1v1h-1zM556 516h1v1h-1zM576 516h1v1h-1zM596 516h1v1h-1zM636 516h1v1h-1zM656 516h1v1h-1zM676 516h1v1h-1zM696 516h1v1h-1zM736 516h1v1h-1zM756 516h1v1h-1zM776 516h1v1h-1zM796 516h1v1h-1zM836 516h1v1h-1zM856 516h1v1h-1zM876 516h1v1h-1zM896 516h1v1h-1zM936 516h1v1h-1zM956 516h1v1h-1zM976 516h1v1h-1zM996 516h1v1h-1zM36 576h1v1h-1zM56 576h1v1h-1zM76 576h1v1h-1zM96 576h1v1h-1zM136 576h1v1h-1zM156 576h1v1h-1zM176 576h1v1h-1zM196 576h1v1h-1zM236 576h1v1h-1zM256 576h1v1h-1zM276 576h1v1h-1zM296 576h1v1h-1zM336 576h1v1h-1zM356 576h1v1h-1zM376 576h1v1h-1zM396 576h1v1h-1zM436 576h1v1h-1zM456 576h1v1h-1zM476 576h1v1h-1zM496 576h1v1h-1zM536 576h1v1h-1zM556 576h1v1h-1zM576 576h1v1h-1zM596 576h1v1h-1zM636 576h1v1h-1zM656 576h1v1h-1zM676 576h1v1h-1zM696 576h1v1h-1zM736 576h1v1h-1zM756 576h1v1h-1zM776 576h1v1h-1zM796 576h1v1h-1zM836 576h1v1h-1zM856 576h1v1h-1zM876 576h1v1h-1zM896 576h1v1h-1zM936 576h1v1h-1zM956 576h1v1h-1zM976 576h1v1h-1zM996 576h1v1h-1z" fill="#9a917a"/>
<path d="M116 47h1v1h-1zM116 59h1v1h-1zM116 71h1v1h-1zM116 83h1v1h-1zM116 95h1v1h-1zM116 107h1v1h-1zM116 119h1v1h-1zM116 131h1v1h-1zM116 143h1v1h-1zM116 155h1v1h-1zM116 167h1v1h-1zM116 179h1v1h-1zM116 191h1v1h-1zM116 203h1v1h-1zM116 215h1v1h-1zM116 227h1v1h-1zM116 239h1v1h-1zM116 251h1v1h-1zM116 263h1v1h-1zM116 275h1v1h-1zM116 287h1v1h-1zM116 299h1v1h-1zM116 311h1v1h-1zM116 323h1v1h-1zM116 347h1v1h-1zM116 359h1v1h-1zM116 371h1v1h-1zM116 383h1v1h-1zM116 395h1v1h-1zM116 407h1v1h-1zM116 419h1v1h-1zM116 431h1v1h-1zM116 443h1v1h-1zM116 455h1v1h-1zM116 467h1v1h-1zM116 479h1v1h-1zM116 491h1v1h-1zM116 503h1v1h-1zM116 515h1v1h-1zM116 527h1v1h-1zM116 539h1v1h-1zM116 551h1v1h-1zM116 563h1v1h-1zM116 575h1v1h-1zM116 587h1v1h-1zM116 599h1v1h-1zM116 611h1v1h-1zM116 623h1v1h-1zM216 47h1v1h-1zM216 59h1v1h-1zM216 71h1v1h-1zM216 83h1v1h-1zM216 95h1v1h-1zM216 107h1v1h-1zM216 119h1v1h-1zM216 131h1v1h-1zM216 143h1v1h-1zM216 155h1v1h-1zM216 167h1v1h-1zM216 179h1v1h-1zM216 191h1v1h-1zM216 203h1v1h-1zM216 215h1v1h-1zM216 227h1v1h-1zM216 239h1v1h-1zM216 251h1v1h-1zM216 263h1v1h-1zM216 275h1v1h-1zM216 287h1v1h-1zM216 299h1v1h-1zM216 311h1v1h-1zM216 323h1v1h-1zM216 347h1v1h-1zM216 359h1v1h-1zM216 371h1v1h-1zM216 383h1v1h-1zM216 395h1v1h-1zM216 407h1v1h-1zM216 419h1v1h-1zM216 431h1v1h-1zM216 443h1v1h-1zM216 455h1v1h-1zM216 467h1v1h-1zM216 479h1v1h-1zM216 491h1v1h-1zM216 503h1v1h-1zM216 515h1v1h-1zM216 527h1v1h-1zM216 539h1v1h-1zM216 551h1v1h-1zM216 563h1v1h-1zM216 575h1v1h-1zM216 587h1v1h-1zM216 599h1v1h-1zM216 611h1v1h-1zM216 623h1v1h-1zM316 47h1v1h-1zM316 59h1v1h-1zM316 71h1v1h-1zM316 83h1v1h-1zM316 95h1v1h-1zM316 107h1v1h-1zM316 119h1v1h-1zM316 131h1v1h-1zM316 143h1v1h-1zM316 155h1v1h-1zM316 167h1v1h-1zM316 179h1v1h-1zM316 191h1v1h-1zM316 203h1v1h-1zM316 215h1v1h-1zM316 227h1v1h-1zM316 239h1v1h-1zM316 251h1v1h-1zM316 263h1v1h-1zM316 275h1v1h-1zM316 287h1v1h-1zM316 299h1v1h-1zM316 311h1v1h-1zM316 323h1v1h-1zM316 347h1v1h-1zM316 359h1v1h-1zM316 371h1v1h-1zM316 383h1v1h-1zM316 395h1v1h-1zM316 407h1v1h-1zM316 419h1v1h-1zM316 431h1v1h-1zM316 443h1v1h-1zM316 455h1v1h-1zM316 467h1v1h-1zM316 479h1v1h-1zM316 491h1v1h-1zM316 503h1v1h-1zM316 515h1v1h-1zM316 527h1v1h-1zM316 539h1v1h-1zM316 551h1v1h-1zM316 563h1v1h-1zM316 575h1v1h-1zM316 587h1v1h-1zM316 599h1v1h-1zM316 611h1v1h-1zM316 623h1v1h-1zM416 47h1v1h-1zM416 59h1v1h-1zM416 71h1v1h-1zM416 83h1v1h-1zM416 95h1v1h-1zM416 107h1v1h-1zM416 119h1v1h-1zM416 131h1v1h-1zM416 143h1v1h-1zM416 155h1v1h-1zM416 167h1v1h-1zM416 179h1v1h-1zM416 191h1v1h-1zM416 203h1v1h-1zM416 215h1v1h-1zM416 227h1v1h-1zM416 239h1v1h-1zM416 251h1v1h-1zM416 263h1v1h-1zM416 275h1v1h-1zM416 287h1v1h-1zM416 299h1v1h-1zM416 311h1v1h-1zM416 323h1v1h-1zM416 347h1v1h-1zM416 359h1v1h-1zM416 371h1v1h-1zM416 383h1v1h-1zM416 395h1v1h-1zM416 407h1v1h-1zM416 419h1v1h-1zM416 431h1v1h-1zM416 443h1v1h-1zM416 455h1v1h-1zM416 467h1v1h-1zM416 479h1v1h-1zM416 491h1v1h-1zM416 503h1v1h-1zM416 515h1v1h-1zM416 527h1v1h-1zM416 539h1v1h-1zM416 551h1v1h-1zM416 563h1v1h-1zM416 575h1v1h-1zM416 587h1v1h-1zM416 599h1v1h-1zM416 611h1v1h-1zM416 623h1v1h-1zM616 47h1v1h-1zM616 59h1v1h-1zM616 71h1v1h-1zM616 83h1v1h-1zM616 95h1v1h-1zM616 107h1v1h-1zM616 119h1v1h-1zM616 131h1v1h-1zM616 143h1v1h-1zM616 155h1v1h-1zM616 167h1v1h-1zM616 179h1v1h-1zM616 191h1v1h-1zM616 203h1v1h-1zM616 215h1v1h-1zM616 227h1v1h-1zM616 239h1v1h-1zM616 251h1v1h-1zM616 263h1v1h-1zM616 275h1v1h-1zM616 287h1v1h-1zM616 299h1v1h-1zM616 311h1v1h-1zM616 323h1v1h-1zM616 347h1v1h-1zM616 359h1v1h-1zM616 371h1v1h-1zM616 383h1v1h-1zM616 395h1v1h-1zM616 407h1v1h-1zM616 419h1v1h-1zM616 431h1v1h-1zM616 443h1v1h-1zM616 455h1v1h-1zM616 467h1v1h-1zM616 479h1v1h-1zM616 491h1v1h-1zM616 503h1v1h-1zM616 515h1v1h-1zM616 527h1v1h-1zM616 539h1v1h-1zM616 551h1v1h-1zM616 563h1v1h-1zM616 575h1v1h-1zM616 587h1v1h-1zM616 599h1v1h-1zM616 611h1v1h-1zM616 623h1v1h-1zM716 47h1v1h-1zM716 59h1v1h-1zM716 71h1v1h-1zM716 83h1v1h-1zM716 95h1v1h-1zM716 107h1v1h-1zM716 119h1v1h-1zM716 131h1v1h-1zM716 143h1v1h-1zM716 155h1v1h-1zM716 167h1v1h-1zM716 179h1v1h-1zM716 191h1v1h-1zM716 203h1v1h-1zM716 215h1v1h-1zM716 227h1v1h-1zM716 239h1v1h-1zM716 251h1v1h-1zM716 263h1v1h-1zM716 275h1v1h-1zM716 287h1v1h-1zM716 299h1v1h-1zM716 311h1v1h-1zM716 323h1v1h-1zM716 347h1v1h-1zM716 359h1v1h-1zM716 371h1v1h-1zM716 383h1v1h-1zM716 395h1v1h-1zM716 407h1v1h-1zM716 419h1v1h-1zM716 431h1v1h-1zM716 443h1v1h-1zM716 455h1v1h-1zM716 467h1v1h-1zM716 479h1v1h-1zM716 491h1v1h-1zM716 503h1v1h-1zM716 515h1v1h-1zM716 527h1v1h-1zM716 539h1v1h-1zM716 551h1v1h-1zM716 563h1v1h-1zM716 575h1v1h-1zM716 587h1v1h-1zM716 599h1v1h-1zM716 611h1v1h-1zM716 623h1v1h-1zM816 47h1v1h-1zM816 59h1v1h-1zM816 71h1v1h-1zM816 83h1v1h-1zM816 95h1v1h-1zM816 107h1v1h-1zM816 119h1v1h-1zM816 131h1v1h-1zM816 143h1v1h-1zM816 155h1v1h-1zM816 167h1v1h-1zM816 179h1v1h-1zM816 191h1v1h-1zM816 203h1v1h-1zM816 215h1v1h-1zM816 227h1v1h-1zM816 239h1v1h-1zM816 251h1v1h-1zM816 263h1v1h-1zM816 275h1v1h-1zM816 287h1v1h-1zM816 299h1v1h-1zM816 311h1v1h-1zM816 323h1v1h-1zM816 347h1v1h-1zM816 359h1v1h-1zM816 371h1v1h-1zM816 383h1v1h-1zM816 395h1v1h-1zM816 407h1v1h-1zM816 419h1v1h-1zM816 431h1v1h-1zM816 443h1v1h-1zM816 455h1v1h-1zM816 467h1v1h-1zM816 479h1v1h-1zM816 491h1v1h-1zM816 503h1v1h-1zM816 515h1v1h-1zM816 527h1v1h-1zM816 539h1v1h-1zM816 551h1v1h-1zM816 563h1v1h-1zM816 575h1v1h-1zM816 587h1v1h-1zM816 599h1v1h-1zM816 611h1v1h-1zM816 623h1v1h-1zM916 47h1v1h-1zM916 59h1v1h-1zM916 71h1v1h-1zM916 83h1v1h-1zM916 95h1v1h-1zM916 107h1v1h-1zM916 119h1v1h-1zM916 131h1v1h-1zM916 143h1v1h-1zM916 155h1v1h-1zM916 167h1v1h-1zM916 179h1v1h-1zM916 191h1v1h-1zM916 203h1v1h-1zM916 215h1v1h-1zM916 227h1v1h-1zM916 239h1v1h-1zM916 251h1v1h-1zM916 263h1v1h-1zM916 275h1v1h-1zM916 287h1v1h-1zM916 299h1v1h-1zM916 311h1v1h-1zM916 323h1v1h-1zM916 347h1v1h-1zM916 359h1v1h-1zM916 371h1v1h-1zM916 383h1v1h-1zM916 395h1v1h-1zM916 407h1v1h-1zM916 419h1v1h-1zM916 431h1v1h-1zM916 443h1v1h-1zM916 455h1v1h-1zM916 467h1v1h-1zM916 479h1v1h-1zM916 491h1v1h-1zM916 503h1v1h-1zM916 515h1v1h-1zM916 527h1v1h-1zM916 539h1v1h-1zM916 551h1v1h-1zM916 563h1v1h-1zM916 575h1v1h-1zM916 587h1v1h-1zM916 599h1v1h-1zM916 611h1v1h-1zM916 623h1v1h-1zM36 95h1v1h-1zM56 95h1v1h-1zM76 95h1v1h-1zM96 95h1v1h-1zM136 95h1v1h-1zM156 95h1v1h-1zM176 95h1v1h-1zM196 95h1v1h-1zM236 95h1v1h-1zM256 95h1v1h-1zM276 95h1v1h-1zM296 95h1v1h-1zM336 95h1v1h-1zM356 95h1v1h-1zM376 95h1v1h-1zM396 95h1v1h-1zM436 95h1v1h-1zM456 95h1v1h-1zM476 95h1v1h-1zM496 95h1v1h-1zM536 95h1v1h-1zM556 95h1v1h-1zM576 95h1v1h-1zM596 95h1v1h-1zM636 95h1v1h-1zM656 95h1v1h-1zM676 95h1v1h-1zM696 95h1v1h-1zM736 95h1v1h-1zM756 95h1v1h-1zM776 95h1v1h-1zM796 95h1v1h-1zM836 95h1v1h-1zM856 95h1v1h-1zM876 95h1v1h-1zM896 95h1v1h-1zM936 95h1v1h-1zM956 95h1v1h-1zM976 95h1v1h-1zM996 95h1v1h-1zM36 155h1v1h-1zM56 155h1v1h-1zM76 155h1v1h-1zM96 155h1v1h-1zM136 155h1v1h-1zM156 155h1v1h-1zM176 155h1v1h-1zM196 155h1v1h-1zM236 155h1v1h-1zM256 155h1v1h-1zM276 155h1v1h-1zM296 155h1v1h-1zM336 155h1v1h-1zM356 155h1v1h-1zM376 155h1v1h-1zM396 155h1v1h-1zM436 155h1v1h-1zM456 155h1v1h-1zM476 155h1v1h-1zM496 155h1v1h-1zM536 155h1v1h-1zM556 155h1v1h-1zM576 155h1v1h-1zM596 155h1v1h-1zM636 155h1v1h-1zM656 155h1v1h-1zM676 155h1v1h-1zM696 155h1v1h-1zM736 155h1v1h-1zM756 155h1v1h-1zM776 155h1v1h-1zM796 155h1v1h-1zM836 155h1v1h-1zM856 155h1v1h-1zM876 155h1v1h-1zM896 155h1v1h-1zM936 155h1v1h-1zM956 155h1v1h-1zM976 155h1v1h-1zM996 155h1v1h-1zM36 215h1v1h-1zM56 215h1v1h-1zM76 215h1v1h-1zM96 215h1v1h-1zM136 215h1v1h-1zM156 215h1v1h-1zM176 215h1v1h-1zM196 215h1v1h-1zM236 215h1v1h-1zM256 215h1v1h-1zM276 215h1v1h-1zM296 215h1v1h-1zM336 215h1v1h-1zM356 215h1v1h-1zM376 215h1v1h-1zM396 215h1v1h-1zM436 215h1v1h-1zM456 215h1v1h-1zM476 215h1v1h-1zM496 215h1v1h-1zM536 215h1v1h-1zM556 215h1v1h-1zM576 215h1v1h-1zM596 215h1v1h-1zM636 215h1v1h-1zM656 215h1v1h-1zM676 215h1v1h-1zM696 215h1v1h-1zM736 215h1v1h-1zM756 215h1v1h-1zM776 215h1v1h-1zM796 215h1v1h-1zM836 215h1v1h-1zM856 215h1v1h-1zM876 215h1v1h-1zM896 215h1v1h-1zM936 215h1v1h-1zM956 215h1v1h-1zM976 215h1v1h-1zM996 215h1v1h-1zM36 275h1v1h-1zM56 275h1v1h-1zM76 275h1v1h-1zM96 275h1v1h-1zM136 275h1v1h-1zM156 275h1v1h-1zM176 275h1v1h-1zM196 275h1v1h-1zM236 275h1v1h-1zM256 275h1v1h-1zM276 275h1v1h-1zM296 275h1v1h-1zM336 275h1v1h-1zM356 275h1v1h-1zM376 275h1v1h-1zM396 275h1v1h-1zM436 275h1v1h-1zM456 275h1v1h-1zM476 275h1v1h-1zM496 275h1v1h-1zM536 275h1v1h-1zM556 275h1v1h-1zM576 275h1v1h-1zM596 275h1v1h-1zM636 275h1v1h-1zM656 275h1v1h-1zM676 275h1v1h-1zM696 275h1v1h-1zM736 275h1v1h-1zM756 275h1v1h-1zM776 275h1v1h-1zM796 275h1v1h-1zM836 275h1v1h-1zM856 275h1v1h-1zM876 275h1v1h-1zM896 275h1v1h-1zM936 275h1v1h-1zM956 275h1v1h-1zM976 275h1v1h-1zM996 275h1v1h-1zM36 395h1v1h-1zM56 395h1v1h-1zM76 395h1v1h-1zM96 395h1v1h-1zM136 395h1v1h-1zM156 395h1v1h-1zM176 395h1v1h-1zM196 395h1v1h-1zM236 395h1v1h-1zM256 395h1v1h-1zM276 395h1v1h-1zM296 395h1v1h-1zM336 395h1v1h-1zM356 395h1v1h-1zM376 395h1v1h-1zM396 395h1v1h-1zM436 395h1v1h-1zM456 395h1v1h-1zM476 395h1v1h-1zM496 395h1v1h-1zM536 395h1v1h-1zM556 395h1v1h-1zM576 395h1v1h-1zM596 395h1v1h-1zM636 395h1v1h-1zM656 395h1v1h-1zM676 395h1v1h-1zM696 395h1v1h-1zM736 395h1v1h-1zM756 395h1v1h-1zM776 395h1v1h-1zM796 395h1v1h-1zM836 395h1v1h-1zM856 395h1v1h-1zM876 395h1v1h-1zM896 395h1v1h-1zM936 395h1v1h-1zM956 395h1v1h-1zM976 395h1v1h-1zM996 395h1v1h-1zM36 455h1v1h-1zM56 455h1v1h-1zM76 455h1v1h-1zM96 455h1v1h-1zM136 455h1v1h-1zM156 455h1v1h-1zM176 455h1v1h-1zM196 455h1v1h-1zM236 455h1v1h-1zM256 455h1v1h-1zM276 455h1v1h-1zM296 455h1v1h-1zM336 455h1v1h-1zM356 455h1v1h-1zM376 455h1v1h-1zM396 455h1v1h-1zM436 455h1v1h-1zM456 455h1v1h-1zM476 455h1v1h-1zM496 455h1v1h-1zM536 455h1v1h-1zM556 455h1v1h-1zM576 455h1v1h-1zM596 455h1v1h-1zM636 455h1v1h-1zM656 455h1v1h-1zM676 455h1v1h-1zM696 455h1v1h-1zM736 455h1v1h-1zM756 455h1v1h-1zM776 455h1v1h-1zM796 455h1v1h-1zM836 455h1v1h-1zM856 455h1v1h-1zM876 455h1v1h-1zM896 455h1v1h-1zM936 455h1v1h-1zM956 455h1v1h-1zM976 455h1v1h-1zM996 455h1v1h-1zM36 515h1v1h-1zM56 515h1v1h-1zM76 515h1v1h-1zM96 515h1v1h-1zM136 515h1v1h-1zM156 515h1v1h-1zM176 515h1v1h-1zM196 515h1v1h-1zM236 515h1v1h-1zM256 515h1v1h-1zM276 515h1v1h-1zM296 515h1v1h-1zM336 515h1v1h-1zM356 515h1v1h-1zM376 515h1v1h-1zM396 515h1v1h-1zM436 515h1v1h-1zM456 515h1v1h-1zM476 515h1v1h-1zM496 515h1v1h-1zM536 515h1v1h-1zM556 515h1v1h-1zM576 515h1v1h-1zM596 515h1v1h-1zM636 515h1v1h-1zM656 515h1v1h-1zM676 515h1v1h-1zM696 515h1v1h-1zM736 515h1v1h-1zM756 515h1v1h-1zM776 515h1v1h-1zM796 515h1v1h-1zM836 515h1v1h-1zM856 515h1v1h-1zM876 515h1v1h-1zM896 515h1v1h-1zM936 515h1v1h-1zM956 515h1v1h-1zM976 515h1v1h-1zM996 515h1v1h-1zM36 575h1v1h-1zM56 575h1v1h-1zM76 575h1v1h-1zM96 575h1v1h-1zM136 575h1v1h-1zM156 575h1v1h-1zM176 575h1v1h-1zM196 575h1v1h-1zM236 575h1v1h-1zM256 575h1v1h-1zM276 575h1v1h-1zM296 575h1v1h-1zM336 575h1v1h-1zM356 575h1v1h-1zM376 575h1v1h-1zM396 575h1v1h-1zM436 575h1v1h-1zM456 575h1v1h-1zM476 575h1v1h-1zM496 575h1v1h-1zM536 575h1v1h-1zM556 575h1v1h-1zM576 575h1v1h-1zM596 575h1v1h-1zM636 575h1v1h-1zM656 575h1v1h-1zM676 575h1v1h-1zM696 575h1v1h-1zM736 575h1v1h-1zM756 575h1v1h-1zM776 575h1v1h-1zM796 575h1v1h-1zM836 575h1v1h-1zM856 575h1v1h-1zM876 575h1v1h-1zM896 575h1v1h-1zM936 575h1v1h-1zM956 575h1v1h-1zM976 575h1v1h-1zM996 575h1v1h-1z" fill="#9a917a" opacity="0.3"/>
<polyline points="17.1,225.0 18.6,220.3 20.2,225.8 22.2,217.6 24.1,227.0 25.7,220.3 27.5,223.0 30.0,220.3 31.5,227.3 32.7,223.4 33.9,227.0 35.4,220.0 37.0,226.6 38.6,217.6 39.5,228.1 40.5,237.5 41.7,229.7 43.2,217.6 45.2,227.3 46.4,222.7 47.5,227.3 48.7,220.3 49.9,225.0 52.2,217.6 53.0,223.4 54.4,230.5 55.8,220.3 57.3,217.6 58.9,222.7 60.8,225.0 62.4,220.3 64.0,225.0 65.5,223.4 66.7,227.3 68.2,228.1 69.8,234.4 71.4,231.2 72.5,229.7 72.9,235.2 74.5,240.6 75.7,244.5 76.8,241.4 78.4,245.3 80.0,251.6 81.5,257.8 83.1,258.6 84.7,262.4 86.3,267.4 88.0,271.6 89.8,278.1 90.6,271.0 93.1,285.9 94.4,290.0 95.7,291.7 97.0,296.7 98.5,301.2 100.0,305.5 101.6,307.0 103.3,308.0 104.9,311.3 105.6,307.0 107.8,325.0 109.3,318.0 111.0,324.5 112.7,330.9 114.7,334.3 116.6,340.6 117.9,343.1 119.2,344.6 120.5,348.7 122.1,350.0 123.8,353.7 125.4,356.5 126.9,361.9 128.3,365.3 129.9,365.7 131.6,367.7 133.2,370.2 133.6,366.0 136.1,379.0 137.7,382.3 139.4,386.2 141.0,387.7 142.6,389.2 144.3,390.0 145.9,391.6 146.6,388.0 148.8,406.3 151.2,400.4 152.7,406.2 154.2,407.4 155.7,413.1 157.1,419.1 158.6,422.9 159.2,419.0 160.8,426.1 162.5,434.6 163.8,437.7 165.1,441.8 166.4,447.3 167.9,453.0 169.3,460.0 171.3,469.8 172.7,436.6 175.2,436.6 177.1,460.0 178.5,462.0 180.1,434.6 182.6,467.4 184.4,448.3 186.2,442.5 187.9,434.6 189.5,447.9 191.8,424.8 193.8,430.7 195.7,420.9 197.7,407.3 199.2,414.1 200.6,397.5 202.1,389.6 203.5,383.8 205.5,374.1 207.0,391.6 209.0,397.5 210.9,360.4 213.3,371.1 215.6,358.4 216.8,338.9 218.4,337.7 220.1,336.0 221.9,321.1 223.0,304.5 225.3,308.0 226.4,305.5 228.9,284.0 230.2,283.4 231.6,282.0 233.4,269.9 235.2,258.6 237.7,262.5 239.3,255.2 241.0,246.1 242.6,240.0 244.1,249.8 245.9,236.1 247.4,236.6 249.0,240.0 251.2,239.0 252.7,233.2 254.3,229.3 256.0,227.9 257.6,224.4 259.5,229.0 261.5,229.3 263.5,220.5 265.4,231.2 266.9,226.1 268.4,221.5 269.7,221.9 271.0,223.5 273.0,219.5 275.2,220.5 277.0,222.5 279.1,213.7 281.6,224.4 283.0,212.7 285.4,221.5 287.3,212.7 288.9,220.5 291.0,219.0 292.4,221.5 293.8,223.4 295.2,226.0 296.7,228.9 299.0,227.5 300.3,227.6 301.6,228.9 302.9,234.2 304.9,225.4 307.0,239.0 309.4,228.3 311.0,231.0 312.3,227.3 314.2,234.1 316.2,239.0 318.8,234.8 321.1,243.0 323.0,238.0 324.5,247.5 326.0,255.7 327.3,248.8 329.1,254.3 330.9,261.5 332.3,265.9 333.8,269.9 335.2,275.2 336.7,278.1 338.0,282.7 339.3,285.2 340.6,289.8 341.3,286.0 343.0,294.7 344.8,299.0 346.5,307.4 347.9,310.3 349.2,314.5 350.6,315.6 351.9,319.8 353.3,323.0 354.0,319.5 355.4,321.8 356.8,327.6 358.2,330.9 359.5,334.6 360.8,336.9 362.1,339.6 363.8,341.9 365.4,341.8 367.1,348.6 368.9,356.5 370.3,345.7 372.2,369.2 373.6,357.5 375.1,362.7 376.6,366.9 378.1,371.1 379.7,374.6 381.4,377.5 383.0,380.9 384.9,386.9 386.9,390.7 388.8,399.5 390.2,392.6 392.7,403.4 394.2,409.7 395.7,413.1 397.0,408.2 398.3,414.0 399.6,420.0 401.2,424.4 402.9,426.4 404.5,431.7 406.8,442.4 408.4,434.6 409.9,450.2 411.3,451.8 412.7,452.2 415.2,462.0 416.9,471.2 418.5,479.5 420.1,445.4 422.4,452.2 424.4,471.7 426.9,447.3 428.5,462.5 430.2,474.6 431.8,456.1 434.3,441.4 435.7,458.0 437.1,449.3 438.6,438.5 440.3,435.4 442.0,433.6 443.8,422.0 445.5,411.2 447.4,407.3 448.9,400.0 450.4,391.6 452.9,374.1 455.2,392.6 456.8,410.2 457.2,387.7 458.8,357.5 460.4,365.2 462.1,376.0 463.6,348.7 466.0,339.9 467.4,334.3 468.9,328.9 469.7,313.3 471.4,308.8 473.2,306.4 475.2,295.7 477.1,285.9 478.6,283.2 480.0,283.0 482.0,267.4 483.4,261.5 485.3,267.4 487.9,251.8 490.4,255.7 491.8,246.4 493.1,240.0 495.7,245.9 497.8,235.2 499.6,241.0 501.5,230.3 503.5,236.1 505.4,233.5 507.4,236.1 508.9,233.1 510.3,228.3 511.8,228.6 513.2,231.2 515.2,223.4 517.1,231.2 518.7,220.5 521.1,226.4 523.0,220.5 524.5,222.6 525.9,226.4 527.4,222.6 528.9,219.5 530.8,227.3 532.3,224.6 533.8,219.5 535.7,227.3 537.7,222.5 539.6,229.3 541.0,225.0 542.5,223.4 544.0,227.2 545.5,231.2 547.0,228.5 548.4,225.4 549.9,229.6 551.4,232.3 552.9,234.2 555.2,224.4 557.8,239.0 560.1,230.3 561.5,234.3 563.0,236.0 564.5,239.3 566.0,244.0 567.5,240.3 568.9,237.1 571.2,258.6 572.8,242.0 574.8,258.6 576.3,251.8 578.7,264.5 580.7,265.5 582.6,267.4 584.5,278.1 586.5,283.2 588.4,285.9 589.9,293.7 591.4,298.6 592.9,294.7 594.6,300.9 596.2,309.4 597.9,310.3 599.5,312.4 601.1,315.2 603.0,321.7 605.0,329.9 606.5,328.9 608.0,327.9 609.7,344.8 611.2,337.9 613.6,351.6 615.2,342.8 617.5,356.5 620.0,357.5 621.4,368.2 623.3,367.0 625.3,365.3 626.8,372.8 628.4,381.9 629.8,376.0 632.3,384.8 633.7,381.9 635.7,393.6 637.7,392.5 639.6,394.6 641.0,396.8 642.5,399.5 644.5,411.2 645.8,404.3 647.1,409.8 648.4,416.1 649.8,420.7 651.3,424.8 652.8,429.2 654.2,430.7 656.2,435.2 658.1,438.5 660.0,445.4 662.0,452.2 663.3,458.9 664.6,464.9 666.9,439.5 668.2,436.2 669.5,431.7 671.4,462.0 672.8,450.3 674.1,441.4 675.7,454.4 677.3,464.9 679.6,438.5 682.0,450.2 683.7,444.3 685.3,437.7 687.0,429.7 688.4,436.6 689.8,427.8 691.3,417.0 692.6,412.4 693.9,408.2 695.2,404.3 697.2,391.6 698.7,384.0 700.1,378.9 701.5,401.4 703.4,409.2 705.4,362.3 707.0,378.0 708.9,373.1 710.5,349.6 711.8,342.8 713.3,342.3 714.8,340.9 715.4,336.7 716.4,319.1 717.3,308.4 718.9,316.2 720.7,313.3 722.2,293.8 723.6,282.0 725.2,294.7 726.7,281.6 728.1,271.3 730.0,265.4 732.0,262.5 733.5,256.2 734.9,252.7 736.4,248.9 737.9,246.9 739.3,242.4 740.8,240.0 742.1,237.9 743.4,235.4 744.7,235.2 746.7,230.7 748.6,229.3 750.0,224.8 751.5,222.5 753.5,232.2 755.4,223.4 757.3,220.2 759.3,219.5 761.5,222.0 762.9,220.8 764.2,220.5 766.0,222.5 768.1,219.5 769.5,214.6 771.1,223.4 772.4,235.2 774.0,219.5 775.5,220.9 776.9,225.4 778.3,228.5 779.8,229.3 781.8,237.1 783.8,224.4 785.7,236.1 787.2,236.5 788.6,236.1 791.0,229.3 792.9,242.0 794.2,238.4 795.5,237.1 797.5,240.5 799.4,239.0 801.7,234.2 802.9,244.0 804.5,238.3 806.2,234.2 808.2,241.0 810.5,238.0 813.0,240.0 814.5,243.0 816.0,246.9 817.9,253.7 819.3,246.9 820.9,256.6 822.3,256.7 823.8,257.6 825.1,260.0 826.4,265.9 827.7,268.4 829.3,273.9 831.0,276.1 832.6,280.1 834.4,284.9 836.1,289.8 838.4,297.7 840.2,297.8 842.0,300.6 843.6,307.6 845.3,317.2 847.2,311.3 849.2,320.6 851.1,330.9 853.1,336.7 855.4,327.9 857.3,352.0 858.8,340.9 861.1,349.6 862.5,352.8 864.0,357.5 865.7,362.9 867.4,366.2 868.9,362.3 870.4,370.5 871.9,380.9 874.2,374.1 875.8,389.7 877.2,388.2 878.7,389.7 880.7,396.0 882.6,399.5 884.0,400.5 885.5,401.4 886.9,407.3 888.6,408.6 890.4,412.1 892.1,412.7 893.9,413.1 896.3,421.9 897.8,424.8 899.2,430.7 900.7,429.3 902.1,427.8 903.6,437.1 905.1,443.4 907.6,442.4 909.9,456.1 912.3,467.8 913.8,426.8 915.8,430.7 917.8,458.0 919.3,446.3 921.3,434.6 922.6,444.6 924.0,452.2 926.0,440.5 928.5,431.7 930.1,446.3 931.5,435.2 933.0,422.9 935.3,428.8 936.8,419.2 938.3,411.2 939.6,407.5 940.9,403.6 942.2,401.4 943.7,392.5 945.1,381.9 947.0,374.1 949.0,393.6 950.6,407.3 952.9,367.2 954.3,368.8 955.8,370.2 957.8,358.4 959.2,346.7 961.7,339.9 962.6,336.5 963.4,323.3 964.4,312.9 966.5,318.1 969.0,302.5 970.4,299.2 971.7,294.2 973.2,280.6 974.8,290.0 976.5,260.8 978.0,270.2 979.4,263.8 980.7,257.5 982.1,252.5 983.5,252.4 984.8,250.4 987.3,236.9 989.0,233.8 990.5,244.2 991.9,235.3 993.2,223.3 995.5,224.5 997.8,223.3 999.3,220.8 1000.9,216.0 1002.5,213.9 1004.0,209.8 1005.7,214.0 1007.8,203.5 1009.8,210.8 1011.7,200.4 1013.8,211.9 1015.5,203.5 1016.5,210.8" fill="none" stroke="#ffff00" stroke-width="1.35" stroke-linejoin="miter" stroke-miterlimit="3"/>
<polygon points="210.6,36 221.4,36 216.5,46.2" fill="#ffa800" shape-rendering="geometricPrecision"/>
<rect x="1004" y="349.5" width="15" height="1.8" fill="#ffff00"/>
<polygon points="995.4,350.3 1004.2,345 1004.2,355.4" fill="#ffff00" shape-rendering="geometricPrecision"/>
<rect x="18" y="595.2" width="6" height="2" fill="#ffff00"/>
<polygon points="30.6,596.2 22.8,591 22.8,601.2" fill="#ffff00" shape-rendering="geometricPrecision"/>
<circle cx="10.4" cy="596.1" r="9" fill="#ffff00" stroke="#ffa400" stroke-width="2" shape-rendering="geometricPrecision"/>
<text x="10.3" y="600.3" style="font-family:'Liberation Sans',sans-serif;font-size:12px;font-weight:normal" text-anchor="middle" fill="#1a1a00" stroke="#1a1a00" stroke-width="0.35">1</text>
</svg>
</div></body></html>
